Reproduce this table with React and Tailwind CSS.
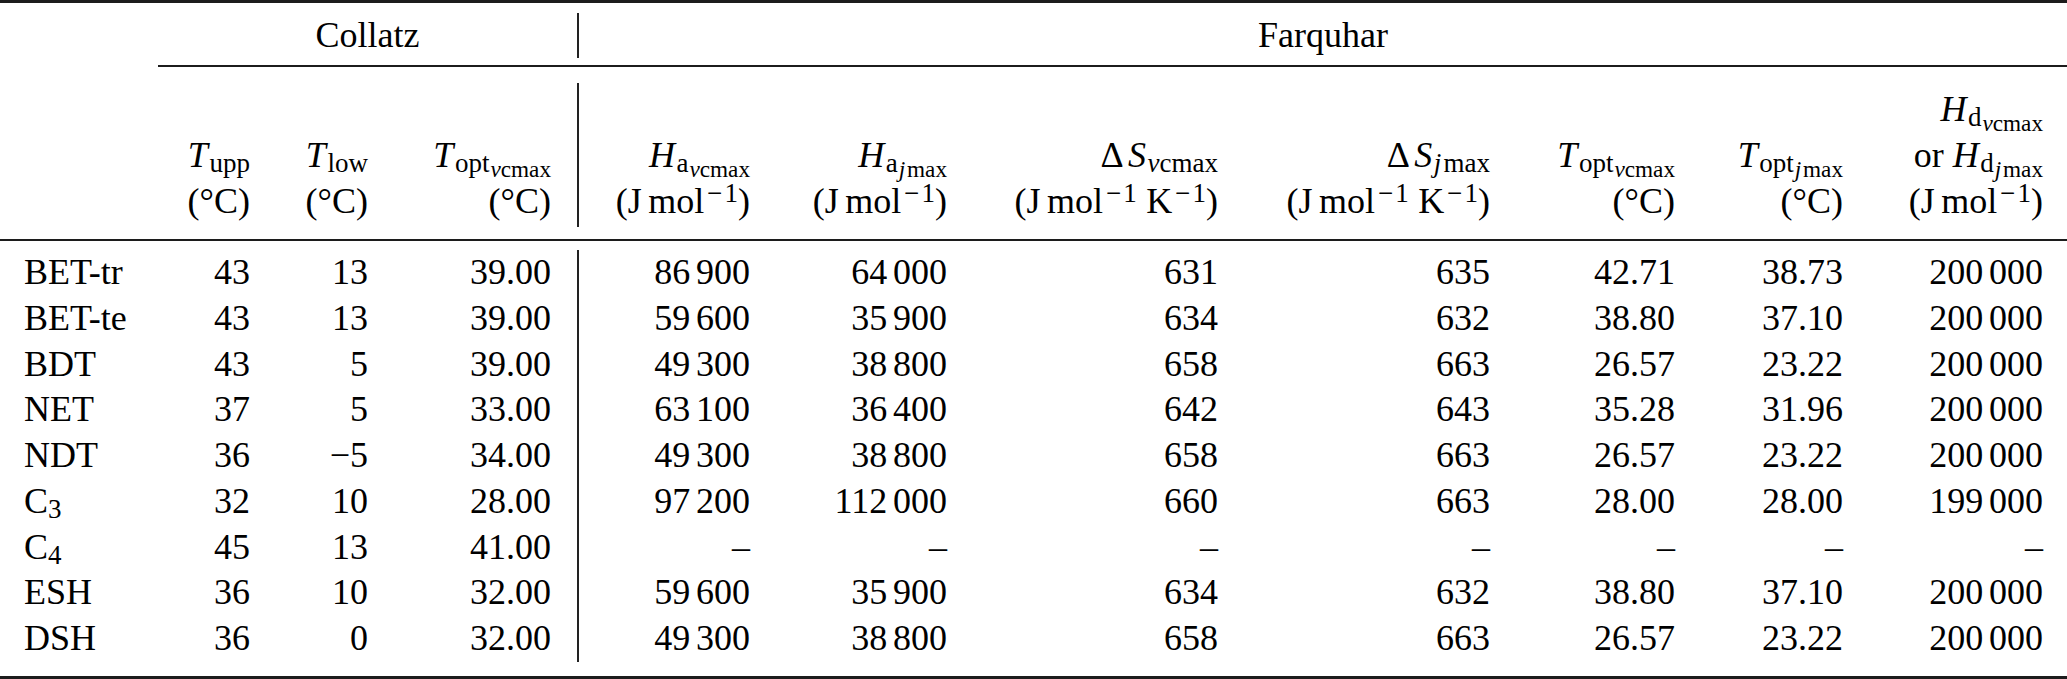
import React from 'react';

// shared column template, widths taken from the reference column edges
const cols = 'grid grid-cols-[158px_92px_118px_209px_173px_197px_271px_272px_185px_168px_224px]';

// subscript after an italic letter gets a small italic correction gap
const Sub = ({ children, tight }) => (
    <sub className={`${tight ? '' : 'ml-[0.06em]'} text-[75%] bottom-[-0.2em]`}>{children}</sub>
);

// second level subscript (vcmax under opt / a / d)
const Sub2 = ({ children }) => (
    <sub className="ml-[0.04em] text-[86%] bottom-[-0.22em]">{children}</sub>
);

const Sup = ({ children }) => (
    <sup className="ml-[0.03em] text-[75%] top-[-0.4em]">{children}</sup>
);

// math minus is wider than the text one
const Minus = () => <span className="px-[0.08em]">−</span>;

// numbers like "86 900" use a thin gap between thousands
const Num = ({ v }) => {
    const parts = v.split(' ');
    if (parts.length === 1) return v;
    return (
        <>
            {parts[0]}
            <span className="inline-block w-[0.16em]" />
            {parts[1]}
        </>
    );
};

const Jmol = ({ k }) => (
    <span>
        (J<span className="inline-block w-[0.18em]" />mol<Sup><Minus />1</Sup>
        {k && (
            <>
                <span className="inline-block w-[0.26em]" />K<Sup><Minus />1</Sup>
            </>
        )}
        )
    </span>
);

const degC = '(°C)';

const Jsub = () => (
    <>
        <i className="mr-[0.08em]">j</i>max
    </>
);

const headers = [
    [null, null],
    [<span><i>T</i><Sub>upp</Sub></span>, degC],
    [<span><i>T</i><Sub>low</Sub></span>, degC],
    [<span><i>T</i><Sub>opt<Sub2><i>v</i>cmax</Sub2></Sub></span>, degC],
    [<span><i>H</i><Sub>a<Sub2><i>v</i>cmax</Sub2></Sub></span>, <Jmol />],
    [<span><i>H</i><Sub>a<Sub2><Jsub /></Sub2></Sub></span>, <Jmol />],
    [<span>Δ<span className="inline-block w-[0.12em]" /><i>S</i><Sub><i>v</i>cmax</Sub></span>, <Jmol k />],
    [<span>Δ<span className="inline-block w-[0.12em]" /><i>S</i><Sub><Jsub /></Sub></span>, <Jmol k />],
    [<span><i>T</i><Sub>opt<Sub2><i>v</i>cmax</Sub2></Sub></span>, degC],
    [<span><i>T</i><Sub>opt<Sub2><Jsub /></Sub2></Sub></span>, degC],
    [<span>or <i>H</i><Sub>d<Sub2><Jsub /></Sub2></Sub></span>, <Jmol />],
];

const dash = '–';

const rows = [
    ['BET-tr', '43', '13', '39.00', '86 900', '64 000', '631', '635', '42.71', '38.73', '200 000'],
    ['BET-te', '43', '13', '39.00', '59 600', '35 900', '634', '632', '38.80', '37.10', '200 000'],
    ['BDT', '43', '5', '39.00', '49 300', '38 800', '658', '663', '26.57', '23.22', '200 000'],
    ['NET', '37', '5', '33.00', '63 100', '36 400', '642', '643', '35.28', '31.96', '200 000'],
    ['NDT', '36', '−5', '34.00', '49 300', '38 800', '658', '663', '26.57', '23.22', '200 000'],
    [<span>C<Sub tight>3</Sub></span>, '32', '10', '28.00', '97 200', '112 000', '660', '663', '28.00', '28.00', '199 000'],
    [<span>C<Sub tight>4</Sub></span>, '45', '13', '41.00', dash, dash, dash, dash, dash, dash, dash],
    ['ESH', '36', '10', '32.00', '59 600', '35 900', '634', '632', '38.80', '37.10', '200 000'],
    ['DSH', '36', '0', '32.00', '49 300', '38 800', '658', '663', '26.57', '23.22', '200 000'],
];

const cellPad = (i) => {
    if (i === 0) return 'pl-[24px] text-left';
    if (i === 3) return 'pr-[26px] text-right';
    if (i === 4) return 'border-l-2 border-[#222] text-right';
    if (i === 10) return 'pr-[24px] text-right';
    return 'text-right';
};

export default function App() {
    return (
        <div className="w-[2067px] h-[679px] overflow-hidden bg-white text-black font-[family-name:'Liberation_Serif','Times_New_Roman',serif] text-[36px]">
            {/* top rule */}
            <div className="h-[3px] bg-[#1c1c1c]" />

            {/* group headings */}
            <div className="grid grid-cols-[158px_419px_1490px] pt-[10px] pb-[7px] leading-[45px]">
                <div />
                <div className="text-center">Collatz</div>
                <div className="text-center border-l-2 border-[#222]">Farquhar</div>
            </div>
            <div className="ml-[158px] h-[2px] bg-[#1c1c1c]" />

            {/* column headings */}
            <div className={`${cols} pt-[16px] pb-[12px]`}>
                {headers.map((h, i) => (
                    <div
                        key={i}
                        className={`flex flex-col items-end justify-end py-[3px] leading-[46px] whitespace-nowrap ${cellPad(i)}`}
                    >
                        {i === 10 && (
                            <div>
                                <i>H</i><Sub>d<Sub2><i>v</i>cmax</Sub2></Sub>
                            </div>
                        )}
                        {h[0] && <div>{h[0]}</div>}
                        {h[1] && <div>{h[1]}</div>}
                    </div>
                ))}
            </div>
            <div className="h-[2px] bg-[#1c1c1c]" />

            {/* data */}
            <div className={`${cols} pt-[9px] pb-[14px]`}>
                {rows.map((row, r) =>
                    row.map((v, i) => (
                        <div key={`${r}-${i}`} className={`leading-[45.75px] whitespace-nowrap ${cellPad(i)}`}>
                            {typeof v === 'string' ? <Num v={v} /> : v}
                        </div>
                    ))
                )}
            </div>

            {/* bottom rule */}
            <div className="h-[3px] bg-[#1c1c1c]" />
        </div>
    );
}
